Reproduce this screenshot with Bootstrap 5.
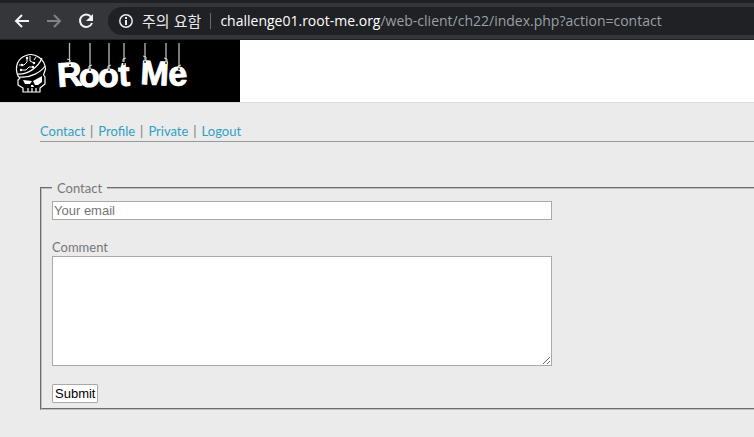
<!DOCTYPE html>
<html lang="ko">
<head>
<meta charset="utf-8">
<meta name="viewport" content="width=device-width, initial-scale=1">
<title>Contact</title>
<link href="https://cdn.jsdelivr.net/npm/bootstrap@5.3.0/dist/css/bootstrap.min.css" rel="stylesheet">
<style>
  body { background: #ebebeb; color: #777; font-family: Lato, "Noto Sans CJK KR", sans-serif; font-size: 13px; line-height: 18px; overflow-x: hidden; }
  .toolbar { background: #35363a; border-top: 3px solid #202124; border-bottom: 1px solid #202124; padding: 4px 0 4px 12px; height: 40px; }
  .tool { border: 0; background: none; padding: 0; width: 20px; height: 20px; display: flex; }
  .tool + .tool { margin-left: 12px; }
  .omnibox { background: #202124; border-radius: 14px 0 0 14px; height: 28px; margin-left: 12px; padding-left: 10px; font-size: 14px; color: #e8eaed; }
  .warn { margin-left: 8px; font-family: "Noto Sans CJK KR", sans-serif; font-size: 15px; }
  .sep { width: 1px; height: 16px; background: #6b6d70; margin: 0 9px; }
  .address { border: 0; background: none; padding: 0; color: #9aa0a6; white-space: nowrap; font-family: "Open Sans", sans-serif; font-size: 14px; }
  .address b { font-weight: 400; color: #fff; }
  .banner { background: #fff; border-bottom: 1px solid #ddd; }
  .content { padding: 20px 0 0 40px; }
  .menu { border-bottom: 1px solid #999; padding-bottom: 2px; line-height: 16px; gap: 5px; }
  .menu a { color: #2f9fc4; text-decoration: none; }
  .contact { margin-top: 37px; border: 2px groove #c0c0c0; border-right: 0; padding: 0 10px 5px; }
  .contact legend { float: none; width: auto; margin: 0 0 4px; padding: 0 5px; font-size: 13px; line-height: 18px; }
  .box { display: block; width: 500px; max-width: 100%; border: 1px solid #a9a9a9; background: #fff; padding: 1px; font: 13px/15px "Liberation Sans", Arial, sans-serif; color: #000; }
  .box::placeholder { color: #757575; }
  .comment { height: 110px; resize: both; }
  .comment-label { margin-top: 18px; }
  .send { margin-top: 18px; border: 1px solid #a9a9a9; border-radius: 1px; background: #fff; padding: 1px 2px; font: 13px/15px "Liberation Sans", Arial, sans-serif; color: #000; }
</style>
<script src="https://cdn.jsdelivr.net/npm/bootstrap@5.3.0/dist/js/bootstrap.bundle.min.js"></script>
</head>
<body>
<div class="toolbar d-flex align-items-center">
  <button class="tool" type="button" aria-label="Back"><svg width="20" height="20" viewBox="0 0 20 20" fill="none" stroke="#f1f3f4" stroke-width="2"><path d="M17 10H4M10 4l-6 6 6 6"/></svg></button>
  <button class="tool" type="button" aria-label="Forward"><svg width="20" height="20" viewBox="0 0 20 20" fill="none" stroke="#808286" stroke-width="2"><path d="M3 10h13M10 4l6 6-6 6"/></svg></button>
  <button class="tool" type="button" aria-label="Reload"><svg width="20" height="20" viewBox="0 0 20 20"><path d="M15 5.8A6.2 6.2 0 1 0 16 12" fill="none" stroke="#f1f3f4" stroke-width="2"/><path d="M17 3v7h-7z" fill="#f1f3f4"/></svg></button>
  <div class="omnibox d-flex align-items-center flex-grow-1 overflow-hidden">
    <svg class="flex-shrink-0" width="16" height="16" viewBox="0 0 16 16"><circle cx="8" cy="8" r="6.2" fill="none" stroke="#e8eaed" stroke-width="1.5"/><path d="M8 4v2M8 7v5" stroke="#e8eaed" stroke-width="2"/></svg>
    <span class="warn text-nowrap">주의 요함</span><span class="sep"></span>
    <button class="address" type="button"><b>challenge01.root-me.org</b>/web-client/ch22/index.php?action=contact</button>
  </div>
</div>
<header class="banner">
  <svg class="d-block" width="240" height="62" viewBox="0 0 240 62" role="img" aria-label="Root Me">
    <path d="M0 0h240v62H0z"/>
    <g fill="none" stroke="#fff" stroke-width="1.2" stroke-linejoin="round">
      <path d="M18 36C14 27 18 18 26 15.500C35 12 45 19 45.500 29L43.500 35L45 37V44L40 48V52H23V48L18 45V40L20 38Z"/>
      <path d="M17 34C27 35 38 28 42 18M20 37C31 38 41 32 45 26"/>
      <path d="M19 25h5l3-3v-4M21 30h5l3-3h4M30 16v5l4 2M36 17l-2 3" stroke-width="1"/>
      <path d="M28 48v4M32 48v4M36 48v4"/>
    </g>
    <g fill="#fff"><path d="M23 40l9 1-2 3h-5zM33 41l9-5v6l-4 3h-3zM31 45h2l1 2h-3z"/><circle cx="22" cy="25" r="1.200"/><circle cx="27" cy="18" r="1.200"/><circle cx="33" cy="27" r="1.200"/><circle cx="34" cy="23" r="1.200"/><circle cx="21" cy="30" r="1.200"/></g>
    <text x="58 79 98 119 140 169" y="47 47 47 46 44 46" rotate="-4 0 0 -3 3 -4" fill="#fff" stroke="#fff" stroke-width="1" stroke-linejoin="round" font-family="Liberation Sans, Arial, sans-serif" font-weight="700" font-size="34">RootMe</text>
    <path d="M69.500 3v20M90 3v26M109 3v26M124 3v19M145 3v18M166 3v19M179 3v25" stroke="#b8b8b8" stroke-width="1.300" fill="none"/>
    <path d="M67 19l3 1v3M92 25l-3 1v3M111 25l-3 1v3M126 18l-3 1v3M143 16l3 1v3M164 18l3 1v3M181 25l-3 1v3" stroke="#ddd" fill="none"/>
    <g fill="#333"><circle cx="70" cy="25" r="1"/><circle cx="90" cy="30" r="1"/><circle cx="109" cy="30" r="1"/><circle cx="124" cy="24" r="1"/><circle cx="145" cy="22" r="1"/><circle cx="166" cy="23" r="1"/><circle cx="179" cy="29" r="1"/></g>
  </svg>
</header>
<main class="content">
  <nav class="menu d-flex"><a href="#contact">Contact</a><span>|</span><a href="#profile">Profile</a><span>|</span><a href="#private">Private</a><span>|</span><a href="#logout">Logout</a></nav>
  <form>
    <fieldset class="contact" id="contact">
      <legend>Contact</legend>
      <input class="box" type="email" placeholder="Your email" aria-label="Your email">
      <label class="comment-label d-block" for="comment">Comment</label>
      <textarea class="box comment" id="comment"></textarea>
      <button class="send d-block" type="submit">Submit</button>
    </fieldset>
  </form>
</main>
</body>
</html>
